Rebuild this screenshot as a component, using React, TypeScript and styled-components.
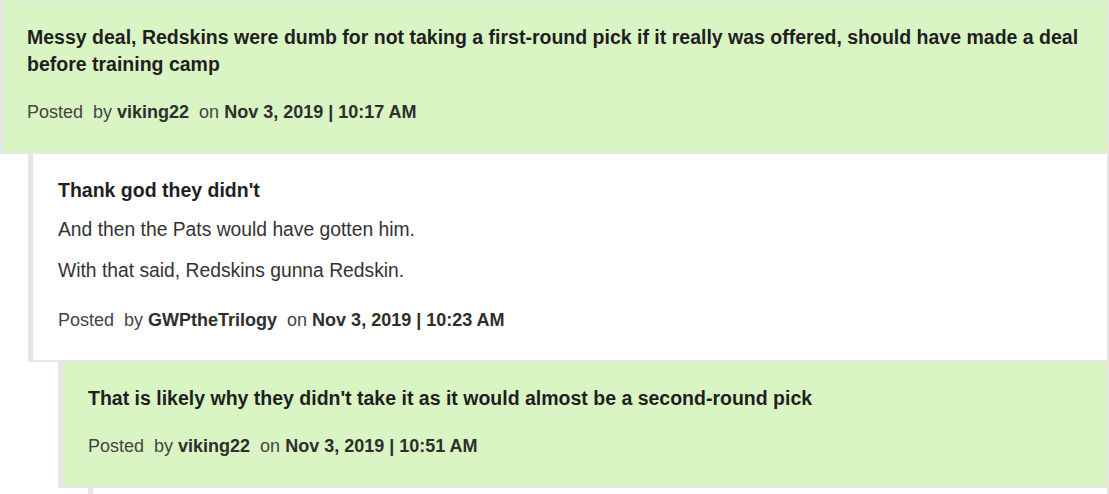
import React from "react";
import styled, { createGlobalStyle } from "styled-components";

const GlobalStyle = createGlobalStyle`
  html, body {
    margin: 0;
    padding: 0;
    overflow: hidden;
    background: #ffffff;
  }
  body {
    font-family: "Liberation Sans", Arial, sans-serif;
    color: #333333;
  }
`;

const Thread = styled.div`
  display: flex;
  flex-direction: column;
  border-top: 1px solid #e6e6e6;
  width: 1109px;
`;

const CommentBox = styled.article<{ $depth: number; $highlight: boolean }>`
  display: flex;
  flex-direction: column;
  margin-left: ${(p) => p.$depth * 30 - 2}px;
  background: ${(p) => (p.$highlight ? "#daf5c4" : "#ffffff")};
  border-left: 5px solid #e6e6e6;
  border-right: 2px solid #e6e6e6;
  border-bottom: 2px solid #e6e6e6;
  padding: 23px 25px 28px ${(p) => (p.$depth === 0 ? 24 : 25)}px;
`;

const Title = styled.h3`
  margin: 0 0 12px;
  font-size: 19.5px;
  line-height: 27px;
  font-weight: 700;
  color: #1f1f1f;
`;

const Paragraph = styled.p`
  margin: 0 0 14px;
  font-size: 19.3px;
  line-height: 27px;
  color: #333333;
`;

const Meta = styled.div`
  margin-top: 10px;
  font-size: 18px;
  line-height: 24px;
  color: #444444;
  white-space: pre;
`;

const Strong = styled.b`
  font-weight: 700;
  color: #2e2e2e;
`;

type Comment = {
  depth: number;
  highlight: boolean;
  title: string;
  body: string[];
  author: string;
  date: string;
};

const comments: Comment[] = [
  {
    depth: 0,
    highlight: true,
    title:
      "Messy deal, Redskins were dumb for not taking a first-round pick if it really was offered, should have made a deal before training camp",
    body: [],
    author: "viking22",
    date: "Nov 3, 2019 | 10:17 AM",
  },
  {
    depth: 1,
    highlight: false,
    title: "Thank god they didn't",
    body: [
      "And then the Pats would have gotten him.",
      "With that said, Redskins gunna Redskin.",
    ],
    author: "GWPtheTrilogy",
    date: "Nov 3, 2019 | 10:23 AM",
  },
  {
    depth: 2,
    highlight: true,
    title:
      "That is likely why they didn't take it as it would almost be a second-round pick",
    body: [],
    author: "viking22",
    date: "Nov 3, 2019 | 10:51 AM",
  },
  {
    depth: 3,
    highlight: false,
    title: "Fair point",
    body: [],
    author: "GWPtheTrilogy",
    date: "Nov 3, 2019 | 10:58 AM",
  },
];

export default function App() {
  return (
    <>
      <GlobalStyle />
      <Thread>
        {comments.map((c, i) => (
          <CommentBox key={i} $depth={c.depth} $highlight={c.highlight}>
            <Title>{c.title}</Title>
            {c.body.map((p, j) => (
              <Paragraph key={j}>{p}</Paragraph>
            ))}
            <Meta>
              {"Posted  by "}
              <Strong>{c.author}</Strong>
              {"  on "}
              <Strong>{c.date}</Strong>
            </Meta>
          </CommentBox>
        ))}
      </Thread>
    </>
  );
}
